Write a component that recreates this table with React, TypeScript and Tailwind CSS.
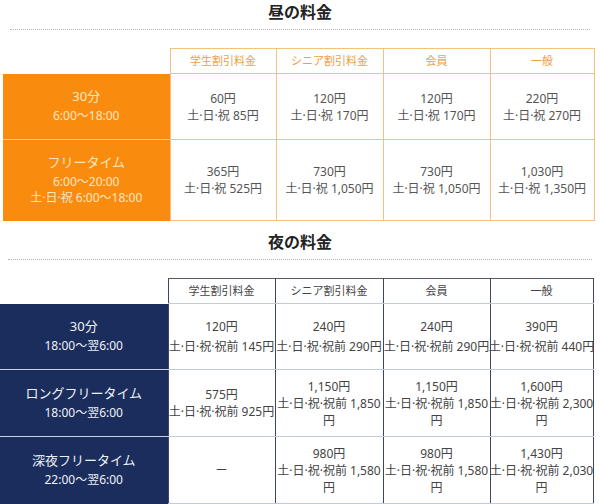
import React from "react";

const dayCols = [
  "学生割引料金",
  "シニア割引料金",
  "会員",
  "一般",
];

type Row = { title: string; times: string[]; cells: string[][]; h: string; lead: string };

const dayRows: Row[] = [
  {
    title: "30分",
    times: ["6:00〜18:00"],
    h: "h-[66px]",
    lead: "leading-[17px]",
    cells: [
      ["60円", "土·日·祝 85円"],
      ["120円", "土·日·祝 170円"],
      ["120円", "土·日·祝 170円"],
      ["220円", "土·日·祝 270円"],
    ],
  },
  {
    title: "フリータイム",
    times: ["6:00〜20:00", "土·日·祝 6:00〜18:00"],
    h: "h-[81px]",
    lead: "leading-[17px]",
    cells: [
      ["365円", "土·日·祝 525円"],
      ["730円", "土·日·祝 1,050円"],
      ["730円", "土·日·祝 1,050円"],
      ["1,030円", "土·日·祝 1,350円"],
    ],
  },
];

const nightRows: Row[] = [
  {
    title: "30分",
    times: ["18:00〜翌6:00"],
    h: "h-[66px]",
    lead: "leading-[20px]",
    cells: [
      ["120円", "土·日·祝·祝前 145円"],
      ["240円", "土·日·祝·祝前 290円"],
      ["240円", "土·日·祝·祝前 290円"],
      ["390円", "土·日·祝·祝前 440円"],
    ],
  },
  {
    title: "ロングフリータイム",
    times: ["18:00〜翌6:00"],
    h: "h-[67px]",
    lead: "leading-[17px]",
    cells: [
      ["575円", "土·日·祝·祝前 925円"],
      ["1,150円", "土·日·祝·祝前 1,850", "円"],
      ["1,150円", "土·日·祝·祝前 1,850", "円"],
      ["1,600円", "土·日·祝·祝前 2,300", "円"],
    ],
  },
  {
    title: "深夜フリータイム",
    times: ["22:00〜翌6:00"],
    h: "h-[67px]",
    lead: "leading-[17px]",
    cells: [
      ["ー"],
      ["980円", "土·日·祝·祝前 1,580", "円"],
      ["980円", "土·日·祝·祝前 1,580", "円"],
      ["1,430円", "土·日·祝·祝前 2,030", "円"],
    ],
  },
];

function Label({ title, times }: { title: string; times: string[] }) {
  return (
    <div className="flex flex-col items-center pb-[3px]">
      <div className="leading-[20px] text-[13px]">{title}</div>
      <div className="mt-[2px] flex flex-col items-center">
        {times.map((t, i) => (
          <div key={i} className="leading-[16px] text-[12px] whitespace-nowrap">
            {t}
          </div>
        ))}
      </div>
    </div>
  );
}

function Cell({ lines, lead }: { lines: string[]; lead: string }) {
  return (
    <div className={`flex flex-col items-center ${lead}`}>
      {lines.map((l, i) => (
        <div key={i} className="whitespace-nowrap">
          {l}
        </div>
      ))}
    </div>
  );
}

export default function App() {
  return (
    <div className="w-[600px] h-[504px] overflow-hidden bg-white font-['Noto_Sans','Noto_Sans_CJK_JP',sans-serif]">
      {/* Day */}
      <div className="pt-[2px] text-center text-[16px] font-bold leading-[20px] text-[#222]">昼の料金</div>
      <div className="mx-[10px] mt-[7px] border-t border-dotted border-[#b5b5b5]" />
      <table className="mt-[18px] ml-[3px] w-[591px] table-fixed border-collapse">
        <thead>
          <tr className="h-[25px]">
            <th className="w-[167px] p-0 border-0"></th>
            {dayCols.map((c, i) => (
              <th
                key={c}
                className={`${i === 3 ? "w-[104px]" : i === 0 ? "w-[106px]" : "w-[107px]"} p-0 border border-[#f4c27c] text-[11px] font-normal text-[#ef9e45]`}
              >
                {c}
              </th>
            ))}
          </tr>
        </thead>
        <tbody>
          {dayRows.map((r, ri) => (
            <tr key={ri} className={r.h}>
              <td className={`p-0 bg-[#f98b0e] text-[#ffe8c0] border-l-0 border-[#f8c890] ${ri === 0 ? "border-b" : ""}`}>
                <Label title={r.title} times={r.times} />
              </td>
              {r.cells.map((c, ci) => (
                <td key={ci} className="p-0 border border-[#f4c27c] text-[12px] text-[#555]">
                  <Cell lines={c} lead={r.lead} />
                </td>
              ))}
            </tr>
          ))}
        </tbody>
      </table>

      {/* Night */}
      <div className="mt-[11px] text-center text-[16px] font-bold leading-[20px] text-[#222]">夜の料金</div>
      <div className="mx-[8px] mt-[7px] border-t border-dotted border-[#b5b5b5]" />
      <table className="mt-[18px] w-[593px] table-fixed border-collapse">
        <thead>
          <tr className="h-[25px]">
            <th className="w-[168px] p-0 border-0"></th>
            {dayCols.map((c, i) => (
              <th
                key={c}
                className={`${i === 3 ? "w-[103px]" : i === 1 ? "w-[108px]" : "w-[107px]"} p-0 border-x border-t border-b border-x-[#3a4560] border-t-[#555a66] border-b-[#c3cad8] text-[11px] font-normal text-[#444]`}
              >
                {c}
              </th>
            ))}
          </tr>
        </thead>
        <tbody>
          {nightRows.map((r, ri) => (
            <tr key={ri} className={r.h}>
              <td className={`p-0 bg-[#1b2d5c] text-[#eef1f8] border-l-0 border-[#c9d1e2] ${ri < 2 ? "border-b" : ""}`}>
                <Label title={r.title} times={r.times} />
              </td>
              {r.cells.map((c, ci) => (
                <td
                  key={ci}
                  className="p-0 border-x border-y border-x-[#3a4560] border-y-[#c3cad8] text-[12px] text-[#444]"
                >
                  <Cell lines={c} lead={r.lead} />
                </td>
              ))}
            </tr>
          ))}
        </tbody>
      </table>
    </div>
  );
}
